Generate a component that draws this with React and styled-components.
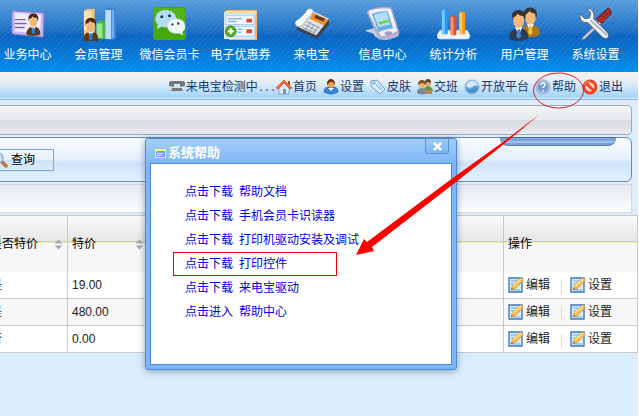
import React from "react";
import styled, { createGlobalStyle } from "styled-components";

const GlobalStyle = createGlobalStyle`
  * {
    box-sizing: border-box;
  }

  body {
    margin: 0;
    background: #dbedfc;
    color: #222;
    font: 12px/16px "Liberation Sans", "Noto Sans CJK SC", sans-serif;
  }

  a {
    color: inherit;
    text-decoration: none;
  }

  svg {
    display: block;
    flex: none;
  }
`;

const Page = styled.div`
  position: relative;
  min-height: 100vh;
  overflow: hidden;
  border-right: 1px solid white;
`;

const MainNav = styled.nav`
  height: 72px;
  padding: 7px 7px 0 0;
  display: flex;
  background:
    repeating-linear-gradient(135deg, rgba(255, 255, 255, 0.06) 0 1px, transparent 1px 4px),
    linear-gradient(#5a9edc 0, #1f71c6 30px, #0a64c0 36px, #0877d4 54px, #008ff0 100%);
`;

const MainItems = styled.div`
  flex: 1;
  display: flex;
  margin-left: -8px;
`;

const MainItem = styled.a`
  flex: 1 1 0;
  display: flex;
  flex-direction: column;
  align-items: center;
  gap: 6px;
  color: white;
  white-space: nowrap;
`;

const StatusBar = styled.div`
  height: 28px;
  padding: 2px 15px 0 0;
  display: flex;
  align-items: center;
  justify-content: flex-end;
  color: #17376e;
  border-bottom: 1px solid #8fafdc;
  background: linear-gradient(#f6f2ee 0, #e2edf6 40%, #a5d6fa 90%, #a5d6fa 26px, #e3f1fd 26px);
`;

const Status = styled.div`
  display: flex;
  align-items: center;
  gap: 1px;
  white-space: nowrap;
`;

const Dots = styled.span`
  font: 10px/10px "Liberation Mono", monospace;
`;

const Tools = styled.nav`
  display: flex;
  gap: 6px;
`;

const ToolLink = styled.a`
  display: flex;
  align-items: center;
  gap: 1px;
  white-space: nowrap;
`;

const Content = styled.main`
  padding-top: 5px;
  display: flex;
  flex-direction: column;
  gap: 2px;
`;

const Panel = styled.div`
  position: relative;
  height: 30px;
  margin: 0 6px 0 -16px;
  border: 1px solid #a3acb5;
  border-radius: 4px;
  background: linear-gradient(#f1f5f7 0, #e6eaed 48%, #d6dbdf 52%, #e8ebee 100%);
`;

const SearchPanel = styled(Panel)`
  height: 45px;
  padding-left: 3px;
  display: flex;
  align-items: center;
  border-color: #7388a6;
  border-radius: 6px;
  background: linear-gradient(#fbfdff 0, #e6f0fd 48%, #d0e3fc 58%, #e3f2fe 100%);
`;

const PagerPanel = styled(Panel)`
  height: 29px;
  border-color: #d3d9df;
  border-radius: 0;
  background: linear-gradient(#e4e9f0, #f8fafc 80%, #ffffff);
`;

const PanelHandle = styled.div`
  position: absolute;
  top: -1px;
  right: 15px;
  width: 116px;
  height: 9px;
  border: 1px solid #5d82b8;
  border-top-color: #4c6c9f;
  border-radius: 0 0 8px 8px;
  background: linear-gradient(#7ea5dc 0 3px, #9dbfec 3px 5px, #7ba2d8 5px);
`;

const SearchButton = styled.button`
  height: 22px;
  padding: 0 18px 0 3px;
  display: flex;
  align-items: center;
  gap: 3px;
  font: inherit;
  color: black;
  border: 1px solid #7ba7ee;
  background: linear-gradient(#f3f7fd 0, #e6effa 48%, #cfe1f6 52%, #dbebfb 100%);
`;

const Grid = styled.table`
  width: calc(100% + 14px);
  margin-left: -14px;
  table-layout: fixed;
  border-collapse: separate;
  border-spacing: 0;
  border-top: 1px solid #c9c9c9;
  background: white;
`;

const HeadCell = styled.th`
  width: ${(props) => props.$width || "auto"};
  height: 56px;
  padding: 0 4px;
  font-weight: normal;
  text-align: left;
  color: black;
  border-right: 1px solid #c9c9c9;
  background: linear-gradient(
    #fafafa 0,
    #e6e6e6 25px,
    #c9c9c9 25px 26px,
    #e9f59c 26px 27px,
    #f6f6f6 27px
  );
`;

const HeadLabel = styled.div`
  display: flex;
  align-items: center;
  justify-content: space-between;
`;

const Row = styled.tr`
  background: ${(props) => (props.$shaded ? "#f7f7f7" : "white")};
`;

const Cell = styled.td`
  height: 27px;
  padding: 0 4px;
  border-right: 1px solid #c9c9c9;
  border-bottom: 1px solid #c9c9c9;
`;

const Actions = styled.div`
  display: flex;
  align-items: center;
`;

const ActionLink = styled.a`
  display: flex;
  align-items: center;
  gap: 2px;
`;

const Divider = styled.span`
  width: 1px;
  height: 14px;
  margin: 4px 8px 0 11px;
  background: #ccdbe8;
`;

const Dialog = styled.section`
  position: absolute;
  top: 138px;
  left: 145px;
  width: 312px;
  padding: 0 4px 4px;
  border: 1px solid #4d8bd4;
  border-radius: 3px;
  background: linear-gradient(rgba(160, 204, 248, 0.96) 0, rgba(118, 178, 248, 0.94) 26px);
  box-shadow: 0 1px 7px rgba(40, 70, 110, 0.5);
`;

const DialogHead = styled.header`
  height: 24px;
  padding: 0 3px 0 5px;
  display: flex;
  justify-content: space-between;
`;

const DialogTitle = styled.h2`
  margin: 0;
  padding-top: 4px;
  display: flex;
  align-items: center;
  gap: 2px;
  font-size: 13px;
  line-height: 18px;
  color: white;
`;

const CloseButton = styled.button`
  width: 24px;
  height: 15px;
  padding: 0;
  display: flex;
  align-items: center;
  justify-content: center;
  border: 1px solid #5590d8;
  border-top: 0;
  border-radius: 0 0 3px 3px;
  background: linear-gradient(#9cc8f7, #7db5f5);
`;

const DialogBody = styled.ul`
  height: 202px;
  margin: 0;
  padding: 16px 22px;
  list-style: none;
  border: 1px solid #4587dc;
  background: white;
`;

const HelpItem = styled.li`
  width: 164px;
  height: 24px;
  padding: 0 12px;
  line-height: 24px;
  white-space: nowrap;
  color: #0000e8;
  outline: ${(props) => (props.$marked ? "1px solid #e80000" : "none")};
  outline-offset: -1px;
`;

const HelpLink = styled.a`
  display: flex;
  gap: 6px;
`;

const Marks = styled.svg`
  position: absolute;
  top: 0;
  left: 0;
  pointer-events: none;
`;

function Person({ suit = "#5a3a1c", hair = "#4a2710", tie = "#2f7de0" }) {
  return (
    <g>
      <path d="M-8 16c0-6 3-8 6-9h4c4 1 6 3 6 9-4 2-12 2-16 0z" fill={suit} />
      <path d="M-3 6l3 7 3-7z" fill="#fff" />
      <path d="M-1 8h2l1 6-2 2-2-2z" fill={tie} />
      <ellipse cx="0" cy="1" rx="4.5" ry="6" fill="#f2b878" />
      <path d="M-5 1c-2-6 1-9 5-9s7 3 5 9l-1-4c-3 0-4-1-5-2-1 2-2 3-4 3z" fill={hair} />
    </g>
  );
}

const mainIcons = {
  card: (
    <>
      <path d="M3 4l29 2q2 0 2 2l-1 23-30-3q-2 0-2-3L1 7q0-3 2-3z" fill="#c6b7ee" stroke="#8d7ac9" />
      <path d="M4 6l27 2-1 20-26-3z" fill="#f0ebff" />
      <path d="M4 13h11M4 17h12M4 21h10" stroke="#7968b8" strokeWidth="1.5" />
      <g transform="translate(23 14) scale(.9)"><Person /></g>
    </>
  ),
  members: (
    <>
      <path d="M2 4l3-2h8v30H2z" fill="#f6c27a" />
      <path d="M2 4h8v20H2z" fill="#ffe3ad" />
      <path d="M15 16l3-2h6v19h-9z" fill="#4bb84d" />
      <path d="M15 17h6v15h-6z" fill="#a5e58a" />
      <path d="M24 3l4-3 7 2v30l-4 2-7-1z" fill="#3c83d8" />
      <path d="M24 3h6v30h-6z" fill="#b9dcff" />
      <path d="M31 3l2-1v29l-2 2z" fill="#7ab3f1" />
      <g transform="translate(9 19) scale(.98)"><Person /></g>
    </>
  ),
  wechat: (
    <>
      <rect width="34" height="34" rx="4" fill="#45a80f" />
      <rect x="1" y="1" width="32" height="16" rx="3" fill="#5bbb22" opacity=".6" />
      <path d="M13 3c6 0 11 4 11 9 0 6-5 9-11 9l-4-1-5 3 1-5C0 13 3 3 13 3z" fill="#b4dcf4" />
      <path d="M24 12c5 0 9 3 9 8 0 3-1 4-3 6l1 3-4-2c-7 1-12-2-12-7s4-8 9-8z" fill="#f1f8fc" stroke="#b8d6e4" strokeWidth=".5" />
      <g fill="#16405c">
        <circle cx="9" cy="10" r="1.6" /><circle cx="17" cy="9" r="1.6" />
        <circle cx="20" cy="18" r="1.2" /><circle cx="26" cy="17" r="1.2" />
      </g>
    </>
  ),
  coupon: (
    <>
      <path d="M2 3h32v31H5z" fill="#ecb772" />
      <path d="M0 5h32v28H0z" fill="#d5ebfb" />
      <path d="M1 4h32v3H1z" fill="#ffd99c" />
      <path d="M2 9h29v9H2zM2 20h29v10H2z" fill="#f4faff" stroke="#a9cee9" />
      <path d="M4 12h15M4 15h9M14 23h5M14 26h4" stroke="#8db9df" strokeWidth="1.5" />
      <path d="M23 12h6v4h-6zM23 23h6v4h-6z" fill="#d94d35" />
      <circle cx="7" cy="25" r="5.5" fill="#5aae28" stroke="#3b8417" />
      <path d="M4 25h6M7 22v6" stroke="#fff" strokeWidth="2" />
    </>
  ),
  phone: (
    <>
      <path d="M15 4l20 9v5L23 33 2 24v-5z" fill="#3d444f" />
      <path d="M16 3l19 9-13 17L2 20z" fill="#dde3ea" />
      <path d="M19 6l15 7-4 6-15-7z" fill="#ee8d26" />
      <path d="M21 8l10 4-2 3-9-4z" fill="#5c3b27" />
      <path d="M12 15l14 7M10 18l13 7M8 21l13 6M16 16l-6 8M20 18l-6 8M24 20l-6 8" stroke="#8d97a4" strokeWidth="1" />
      <path d="M14 2c4-1 6 2 4 4l-9 11c-1 4-8 5-9 0 0-3 2-4 4-4l7-7c0-2 1-3 3-4z" fill="#f3f6fa" stroke="#8f9ba9" strokeWidth=".8" />
      <path d="M2 16l13-12" stroke="#fff" strokeWidth="2" />
    </>
  ),
  pda: (
    <>
      <path d="M0 24l8-2 6 11-4-2-3-4-7-2z" fill="#ccccda" />
      <path d="M3 3Q13-1 24 0q2 0 3 2l7 23c1 4-1 6-5 7-6 2-11 3-16 1L1 6q0-2 2-3z" fill="#b9b4d0" />
      <path d="M3 3Q13 0 24 1l2 1 7 23q-8 5-18 6L2 6z" fill="#f0eff9" stroke="#8c86ac" strokeWidth=".7" />
      <path d="M6 7q8-3 16-3l6 18q-9 1-15 4z" fill="#67aee9" />
      <path d="M8 8q7-2 13-3l4 13q-7 1-12 3z" fill="#b4dcfb" />
      <path d="M13 17l11-3" stroke="#72d33f" strokeWidth="2.500" />
      <ellipse cx="23" cy="27" rx="4" ry="2" fill="#a79fc6" />
    </>
  ),
  chart: (
    <>
      <path d="M3 24h28l3 5q0 4-3 4H3q-3 0-3-4z" fill="#eef4fb" stroke="#b9cde4" strokeWidth=".7" />
      <rect x="5" y="2" width="6" height="26" rx="1" fill="#269af2" />
      <path d="M5 3h3v25H5z" fill="#75c7ff" />
      <rect x="14" y="9" width="6" height="20" rx="1" fill="#e25224" />
      <path d="M14 10h3v19h-3z" fill="#fa936a" />
      <rect x="23" y="5" width="6" height="23" rx="1" fill="#f49a17" />
      <path d="M23 6h3v22h-3z" fill="#ffcc61" />
    </>
  ),
  users: (
    <>
      <g transform="translate(23 10) scale(1.2)"><Person suit="#b07719" hair="#3a3532" tie="#f1bf37" /></g>
      <g transform="translate(11 13) scale(1.25)"><Person suit="#2b3c57" hair="#33302f" tie="#4582c6" /></g>
    </>
  ),
  tools: (
    <>
      <path d="M25 11L4 31l-2 3 4-1 21-20z" fill="#c7cbd1" stroke="#666d77" strokeWidth=".7" />
      <path d="M30 1q4 2 3 6l-10 10-5-5z" fill="#c52b27" stroke="#56201d" />
      <path d="M29 3l-8 8m10-6l-8 8" stroke="#412022" />
      <path d="M8 1l4 5-1 5-5 1-5-5c-1 6 3 10 8 9l15 15c4 4 9-1 5-5L15 12C17 6 13 1 8 1z" fill="#edf0f2" stroke="#59616b" />
      <path d="M12 14l17 15" stroke="#aeb6be" strokeWidth="2" />
    </>
  ),
};

const toolIcons = {
  handset: (
    <>
      <path d="M0 7V4q0-2 3-2h10q3 0 3 2v3l-5 1V5H5v3z" fill="#777" />
      <path d="M3 9h10v2l2 1H1l2-1z" fill="#777" />
    </>
  ),
  home: (
    <>
      <path d="M3 8l5-5 5 5v7H3z" fill="#dceaf5" stroke="#84a6c3" />
      <path d="M7 10h3v5H7z" fill="#5b9bd2" />
      <path d="M12 2h2v5l-2-2z" fill="#b94724" />
      <path d="M0 9l8-8 8 8-2 1-6-6-6 6z" fill="#f06a33" stroke="#cc4318" strokeWidth=".6" />
    </>
  ),
  user: (
    <>
      <path d="M1 13q0-5 5-5h4q5 0 5 5-7 4-14 0z" fill="#3782d9" stroke="#225ca5" strokeWidth=".7" />
      <path d="M5 9l3 3 3-3z" fill="#fff" />
      <circle cx="8" cy="5" r="3.7" fill="#e99b50" />
      <path d="M4 6c-1-8 9-8 8 0l-2-3H7z" fill="#6f3311" />
    </>
  ),
  tag: (
    <>
      <path d="M1 2l6-1 8 9-5 5L1 7z" fill="#d9efff" stroke="#6f9fca" />
      <path d="M6 6l5 5M8 5l4 5" stroke="#78b4e4" />
      <circle cx="4" cy="4" r="1.3" fill="#fff" stroke="#6f9fca" />
    </>
  ),
  shift: (
    <>
      <path d="M7 12q0-5 4-5t5 5l-3 2z" fill="#64973c" />
      <circle cx="11" cy="4" r="3" fill="#e3a564" /><path d="M8 4q0-4 3-4t3 4l-3-1z" fill="#614022" />
      <path d="M0 14q0-5 5-5t5 5q-5 3-10 0z" fill="#7b8898" />
      <circle cx="5" cy="6" r="3.2" fill="#efb473" /><path d="M1 6q0-5 4-5t4 5L5 4z" fill="#8a531d" />
      <path d="M8 11h7v4H8z" fill="#b28a53" />
    </>
  ),
  globe: (
    <>
      <circle cx="8" cy="8" r="7" fill="#65a9df" stroke="#8cb3d4" />
      <path d="M2 7Q4 1 10 2q4 1 4 5-3-2-6 1-3 2-6-1z" fill="#d4eafa" />
      <path d="M2 10q4 2 7-1 3-2 5 0-2 5-6 5-4 0-6-4z" fill="#4590cd" />
    </>
  ),
  help: (
    <>
      <circle cx="8" cy="8" r="7" fill="#7299d0" stroke="#a9bddb" strokeWidth="1.5" />
      <circle cx="8" cy="8" r="5.7" fill="none" stroke="#dce8f6" strokeWidth=".6" />
      <path d="M6 6q0-2 2-2t2 2q0 1-1 1.500-1 .5-1 1.500M8 11v1.500" fill="none" stroke="#fff" strokeWidth="1.6" />
    </>
  ),
  exit: (
    <>
      <circle cx="8" cy="8" r="6" fill="#f6d4c9" stroke="#e94622" strokeWidth="3" />
      <path d="M4 4l8 8" stroke="#e94622" strokeWidth="3" />
      <path d="M2 6q2-4 6-4" fill="none" stroke="#ff9a77" />
    </>
  ),
  edit: (
    <>
      <path d="M1 1h13v14H1z" fill="#d8ebfc" stroke="#3a78c4" strokeWidth="1.4" />
      <path d="M3 4h6M3 7h4M5 13h7" stroke="#6faae3" />
      <path d="M3 13l1-4 8-8q3 0 3 3l-8 8z" fill="#f5bd4c" stroke="#c98a35" strokeWidth=".6" />
      <path d="M5 9l8-7" stroke="#ffe69b" strokeWidth="1.4" />
      <path d="M3 13l1-2 1 1z" fill="#59422b" />
    </>
  ),
  search: (
    <>
      <path d="M9 9l5 5" stroke="#bc7431" strokeWidth="3.500" strokeLinecap="round" />
      <circle cx="6" cy="6" r="5" fill="#cfe6fa" stroke="#8eafd0" strokeWidth="1.5" />
    </>
  ),
};

function MainIcon({ name }) {
  return <svg width="34" height="34" viewBox="0 0 35 35" aria-hidden="true">{mainIcons[name]}</svg>;
}

function Icon({ name }) {
  return <svg width="16" height="16" viewBox="0 0 16 16" aria-hidden="true">{toolIcons[name]}</svg>;
}

function SortArrows() {
  return (
    <svg width="9" height="11" viewBox="0 0 9 11" aria-hidden="true">
      <path d="M0.500 4.500L4.500 0.500l4 4zM0.500 6.500h8l-4 4z" fill="#a8a8a8" />
    </svg>
  );
}

const mainItems = [
  ["card", "业务中心"],
  ["members", "会员管理"],
  ["wechat", "微信会员卡"],
  ["coupon", "电子优惠券"],
  ["phone", "来电宝"],
  ["pda", "信息中心"],
  ["chart", "统计分析"],
  ["users", "用户管理"],
  ["tools", "系统设置"],
];

const tools = [
  ["home", "首页"],
  ["user", "设置"],
  ["tag", "皮肤"],
  ["shift", "交班"],
  ["globe", "开放平台"],
  ["help", "帮助"],
  ["exit", "退出"],
];

const rows = [
  { special: "是", price: "19.00" },
  { special: "是", price: "480.00" },
  { special: "否", price: "0.00" },
];

const helpItems = [
  ["点击下载", "帮助文档"],
  ["点击下载", "手机会员卡识读器"],
  ["点击下载", "打印机驱动安装及调试"],
  ["点击下载", "打印控件"],
  ["点击下载", "来电宝驱动"],
  ["点击进入", "帮助中心"],
];

function PriceTable() {
  return (
    <Grid>
      <thead>
        <tr>
          <HeadCell $width="82px"><HeadLabel>是否特价<SortArrows /></HeadLabel></HeadCell>
          <HeadCell $width="81px"><HeadLabel>特价<SortArrows /></HeadLabel></HeadCell>
          <HeadCell />
          <HeadCell $width="134px">操作</HeadCell>
        </tr>
      </thead>
      <tbody>
        {rows.map((row, i) => (
          <Row key={row.price} $shaded={i % 2 === 1}>
            <Cell>{row.special}</Cell>
            <Cell>{row.price}</Cell>
            <Cell />
            <Cell>
              <Actions>
                <ActionLink href="#"><Icon name="edit" />编辑</ActionLink>
                <Divider />
                <ActionLink href="#"><Icon name="edit" />设置</ActionLink>
              </Actions>
            </Cell>
          </Row>
        ))}
      </tbody>
    </Grid>
  );
}

function HelpDialog() {
  return (
    <Dialog role="dialog" aria-labelledby="help-title">
      <DialogHead>
        <DialogTitle id="help-title">
          <svg width="11" height="9" viewBox="0 0 11 9" aria-hidden="true">
            <path d="M.5.500h10v8H.5z" fill="#6fa9e4" stroke="#fff56e" />
            <path d="M0 1h11" stroke="#fff56e" strokeWidth="2" />
            <path d="M2 4.500h6M2 6.500h5" stroke="#fff56e" />
          </svg>
          系统帮助
        </DialogTitle>
        <CloseButton aria-label="关闭">
          <svg width="9" height="9" viewBox="0 0 9 9">
            <path d="M1 1l7 7M8 1L1 8" stroke="#fff" strokeWidth="2.500" />
          </svg>
        </CloseButton>
      </DialogHead>
      <DialogBody>
        {helpItems.map(([action, target]) => (
          <HelpItem key={target} $marked={target === "打印控件"}>
            <HelpLink href="#"><span>{action}</span><span>{target}</span></HelpLink>
          </HelpItem>
        ))}
      </DialogBody>
    </Dialog>
  );
}

export default function App() {
  return (
    <>
      <GlobalStyle />
      <Page>
        <MainNav>
          <MainItems>
            {mainItems.map(([icon, label]) => (
              <MainItem href="#" key={icon}><MainIcon name={icon} />{label}</MainItem>
            ))}
          </MainItems>
        </MainNav>
        <StatusBar>
          <Status><Icon name="handset" /><span>来电宝检测中<Dots>...</Dots></span></Status>
          <Tools>
            {tools.map(([icon, label]) => (
              <ToolLink href="#" key={icon}><Icon name={icon} />{label}</ToolLink>
            ))}
          </Tools>
        </StatusBar>
        <Content>
          <Panel />
          <SearchPanel>
            <SearchButton><Icon name="search" />查询</SearchButton>
            <PanelHandle />
          </SearchPanel>
          <PagerPanel />
          <PriceTable />
        </Content>
        <HelpDialog />
        {/* hand-drawn pointer from the help entry to the dialog */}
        <Marks width="639" height="416" viewBox="0 0 639 416" aria-hidden="true">
          <ellipse cx="558.5" cy="90.5" rx="25" ry="17.500" fill="none" stroke="#e01b24" />
          <path d="M540 114L503 142 450 180 367 242l-3-3-8 16 18-4-2-4 84-65 48-38z" fill="#f00" />
        </Marks>
      </Page>
    </>
  );
}
